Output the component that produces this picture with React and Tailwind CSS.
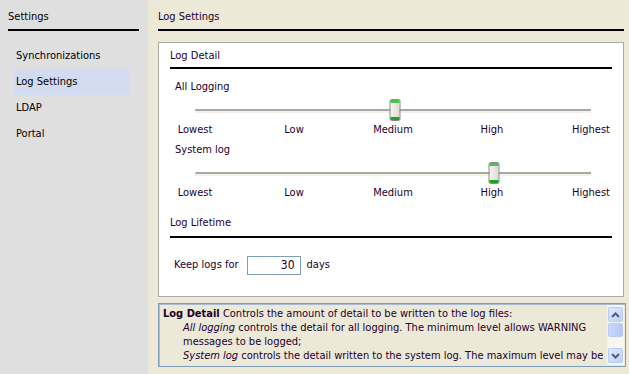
import React from "react";

const labels = ["Lowest", "Low", "Medium", "High", "Highest"];

function Thumb() {
  return (
    <div className="w-[11px] h-[22px] rounded-[2px] border border-[#8a8a8a] bg-gradient-to-r from-[#f4f4f0] to-[#dedbd0] flex flex-col justify-between">
      <div className="h-[3px] bg-[#4ec14e] rounded-t-[1px]" />
      <div className="h-[3px] bg-[#21a121] rounded-b-[1px]" />
    </div>
  );
}

function Slider({ title, value }) {
  return (
    <div>
      <div className="pl-[16px] h-[22px] leading-[22px]">{title}</div>
      <div className="relative ml-[36px] w-[396px] h-[22px] pt-[11px]">
        <div className="h-[2px] bg-[#a9a9a3] rounded-l-[2px]" />
        <div className="h-[2px] bg-[#f2f1ea]" />
        <div
          className="absolute top-[1px] -translate-x-1/2"
          style={{ left: `${value * 100}%` }}
        >
          <Thumb />
        </div>
      </div>
      <div className="ml-[6px] w-[456px] flex justify-between h-[19px] leading-[19px]">
        {labels.map((l) => (
          <div key={l} className="w-[60px] text-center">
            {l}
          </div>
        ))}
      </div>
    </div>
  );
}

function ScrollBtn({ dir }) {
  return (
    <div className="w-[15px] h-[15px] rounded-[2px] border border-[#b8caf5] bg-gradient-to-br from-[#e3ebfe] to-[#bcd0f8] flex items-center justify-center">
      <svg width="9" height="6" viewBox="0 0 9 6">
        <path
          d={dir === "up" ? "M1 5 L4.5 1.5 L8 5" : "M1 1 L4.5 4.5 L8 1"}
          fill="none"
          stroke="#4d6185"
          strokeWidth="2"
        />
      </svg>
    </div>
  );
}

export default function App() {
  const items = ["Synchronizations", "Log Settings", "LDAP", "Portal"];
  return (
    <div className="w-[629px] h-[374px] overflow-hidden flex text-[11px] text-[#22002c] font-['Tahoma','DejaVu_Sans_Condensed','Liberation_Sans',sans-serif]">
      {/* sidebar */}
      <div className="w-[149px] bg-[#dfdfdf] text-black">
        <div className="px-[8px] pt-[9px]">
          <div className="h-[16px] leading-[16px]">Settings</div>
          <div className="mt-[4px] w-[131px] h-[2px] bg-black" />
        </div>
        <div className="mt-[12px] pl-[14px]">
          {items.map((it) => (
            <div
              key={it}
              className={`w-[115px] h-[26px] leading-[26px] pl-[2px] ${
                it === "Log Settings" ? "bg-[#d3dbf0]" : ""
              }`}
            >
              {it}
            </div>
          ))}
        </div>
      </div>

      {/* main */}
      <div className="flex-1 bg-[#ece9d8] pl-[10px] pr-[3px]">
        <div className="pt-[9px]">
          <div className="h-[16px] leading-[16px]">Log Settings</div>
          <div className="mt-[4px] w-[466px] h-[2px] bg-black" />
        </div>

        <div className="mt-[11px] w-[466px] h-[255px] bg-white border border-[#acaaa0] pl-[11px] pr-[11px]">
          <div className="h-[24px] leading-[24px] pt-[1px]">Log Detail</div>
          <div className="h-[2px] bg-black" />
          <div className="-ml-[11px] mt-[7px]">
            <Slider title="All Logging" value={0.505} />
            <Slider title="System log" value={0.755} />
          </div>
          <div className="mt-[10px] h-[24px] leading-[21px]">Log Lifetime</div>
          <div className="h-[2px] bg-black" />
          <div className="mt-[18px] flex items-center pl-[4px]">
            <span>Keep logs for</span>
            <div className="ml-[8px] w-[54px] h-[19px] border border-[#7f9db9] bg-white text-right pr-[5px] leading-[17px] text-[12px]">
              30
            </div>
            <span className="ml-[6px]">days</span>
          </div>
        </div>

        <div className="mt-[6px] w-[468px] h-[64px] border border-[#7f9db9] bg-[#ece9d8] shadow-[inset_1px_1px_0_#a8bad4] flex">
          <div className="flex-1 overflow-hidden pl-[4px] pt-[3px] leading-[14px] text-[11px] whitespace-nowrap">
            <div>
              <b>Log Detail</b> Controls the amount of detail to be written to the log files:
            </div>
            <div className="pl-[20px]">
              <i>All logging</i> controls the detail for all logging. The minimum level allows WARNING
            </div>
            <div className="pl-[20px]">messages to be logged;</div>
            <div className="pl-[20px]">
              <i>System log</i> controls the detail written to the system log. The maximum level may be
            </div>
          </div>
          <div className="w-[17px] mr-[1px] my-[1px] bg-[#f7f6f1] flex flex-col items-center py-[2px]">
            <ScrollBtn dir="up" />
            <div className="mt-[1px] w-[15px] h-[14px] rounded-[2px] border border-[#b8caf5] bg-gradient-to-r from-[#c9d8fc] to-[#b4c8f6]" />
            <div className="flex-1" />
            <ScrollBtn dir="down" />
          </div>
        </div>
      </div>
    </div>
  );
}
